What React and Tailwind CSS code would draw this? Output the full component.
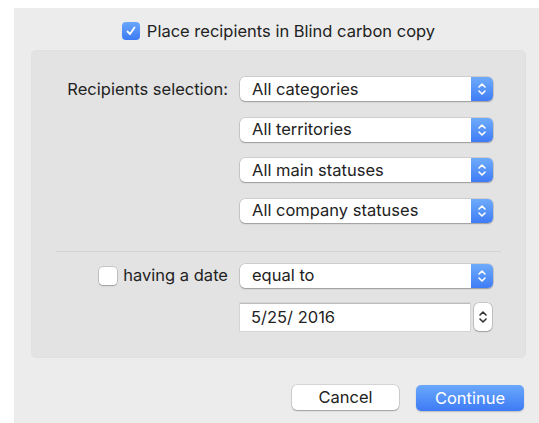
import React from "react";

function Chevrons({ className = "" }) {
    return (
        <svg viewBox="0 0 10 16" className={className} fill="none" stroke="currentColor" strokeWidth="1.6" strokeLinecap="round" strokeLinejoin="round">
            <path d="M2 6 L5 3 L8 6" />
            <path d="M2 10 L5 13 L8 10" />
        </svg>
    );
}

function Popup({ label }) {
    return (
        <div className="flex h-[24px] w-[253px] rounded-[5px] bg-white shadow-[0_0_0_0.5px_rgba(0,0,0,0.18),0_1px_1.5px_rgba(0,0,0,0.25)]">
            <div className="flex flex-1 items-center pl-[12px] text-[16.5px] text-[#222]">{label}</div>
            <div className="flex w-[22px] items-center justify-center rounded-r-[5px] bg-gradient-to-b from-[#6fabfa] to-[#3f7cf6] text-white">
                <Chevrons className="h-[16px] w-[10px]" />
            </div>
        </div>
    );
}

function Check({ checked }) {
    if (checked) {
        return (
            <div className="flex h-[18px] w-[18px] items-center justify-center rounded-[4px] bg-gradient-to-b from-[#6aa6fa] to-[#3d7bf5]">
                <svg viewBox="0 0 12 12" className="h-[12px] w-[12px]" fill="none" stroke="white" strokeWidth="1.8" strokeLinecap="round" strokeLinejoin="round">
                    <path d="M2.5 6.5 L5 9 L9.5 2.5" />
                </svg>
            </div>
        );
    }
    return <div className="h-[18px] w-[18px] rounded-[4px] bg-white shadow-[0_0_0_0.5px_rgba(0,0,0,0.25),0_1px_1.5px_rgba(0,0,0,0.2)]" />;
}

export default function App() {
    return (
        <div className="h-[423px] w-[539px] overflow-hidden bg-white pl-[14px] pt-[8px] font-['Inter',sans-serif] text-[#222]">
            <div className="flex h-[415px] w-[525px] flex-col bg-[#ececec]">
                {/* Bcc toggle */}
                <div className="flex h-[43px] items-center justify-center gap-[7px] pl-[4px] pt-[3px]">
                    <Check checked />
                    <span className="text-[16.5px]">Place recipients in Blind carbon copy</span>
                </div>

                {/* Filter box */}
                <div className="ml-[18px] flex h-[306px] w-[493px] flex-col rounded-[4px] bg-[#e3e3e3] pt-[26px] shadow-[0_0_0_1px_rgba(0,0,0,0.05)]">
                    <div className="flex">
                        <div className="flex h-[24px] w-[196px] items-center justify-end text-[16.5px]">Recipients selection:</div>
                        <div className="ml-[12px] flex flex-col gap-[16.5px]">
                            <Popup label="All categories" />
                            <Popup label="All territories" />
                            <Popup label="All main statuses" />
                            <Popup label="All company statuses" />
                        </div>
                    </div>

                    <div className="mx-[24px] mt-[28px] h-px bg-[#d2d2d2]" />

                    <div className="mt-[12px] flex">
                        <div className="flex h-[24px] w-[196px] items-center justify-end gap-[6px]">
                            <Check />
                            <span className="text-[16.5px]">having a date</span>
                        </div>
                        <div className="ml-[12px] flex flex-col gap-[15px]">
                            <Popup label="equal to" />
                            <div className="flex items-center gap-[4px]">
                                <div className="flex h-[28px] w-[230px] items-center border-t border-[#bdbdbd] bg-white pl-[11px] text-[16.5px] shadow-[0_0_0_0.5px_rgba(0,0,0,0.12)]">
                                    5/25/ 2016
                                </div>
                                <div className="flex h-[28px] w-[18px] items-center justify-center rounded-[5px] bg-white text-[#333] shadow-[0_0_0_0.5px_rgba(0,0,0,0.25),0_1px_1.5px_rgba(0,0,0,0.2)]">
                                    <Chevrons className="h-[16px] w-[10px]" />
                                </div>
                            </div>
                        </div>
                    </div>
                </div>

                {/* Dialog buttons */}
                <div className="mt-[28px] flex justify-end gap-[17px] pr-[15px]">
                    <button className="h-[25px] w-[107px] rounded-[5px] bg-white text-[16.5px] text-[#222] shadow-[0_0_0_0.5px_rgba(0,0,0,0.2),0_1px_1.5px_rgba(0,0,0,0.25)]">
                        Cancel
                    </button>
                    <button className="h-[26px] w-[108px] rounded-[5px] bg-gradient-to-b from-[#6aa8fb] to-[#3e7af5] text-[16.5px] text-white shadow-[0_1px_1.5px_rgba(0,0,0,0.2)]">
                        Continue
                    </button>
                </div>
            </div>
        </div>
    );
}
